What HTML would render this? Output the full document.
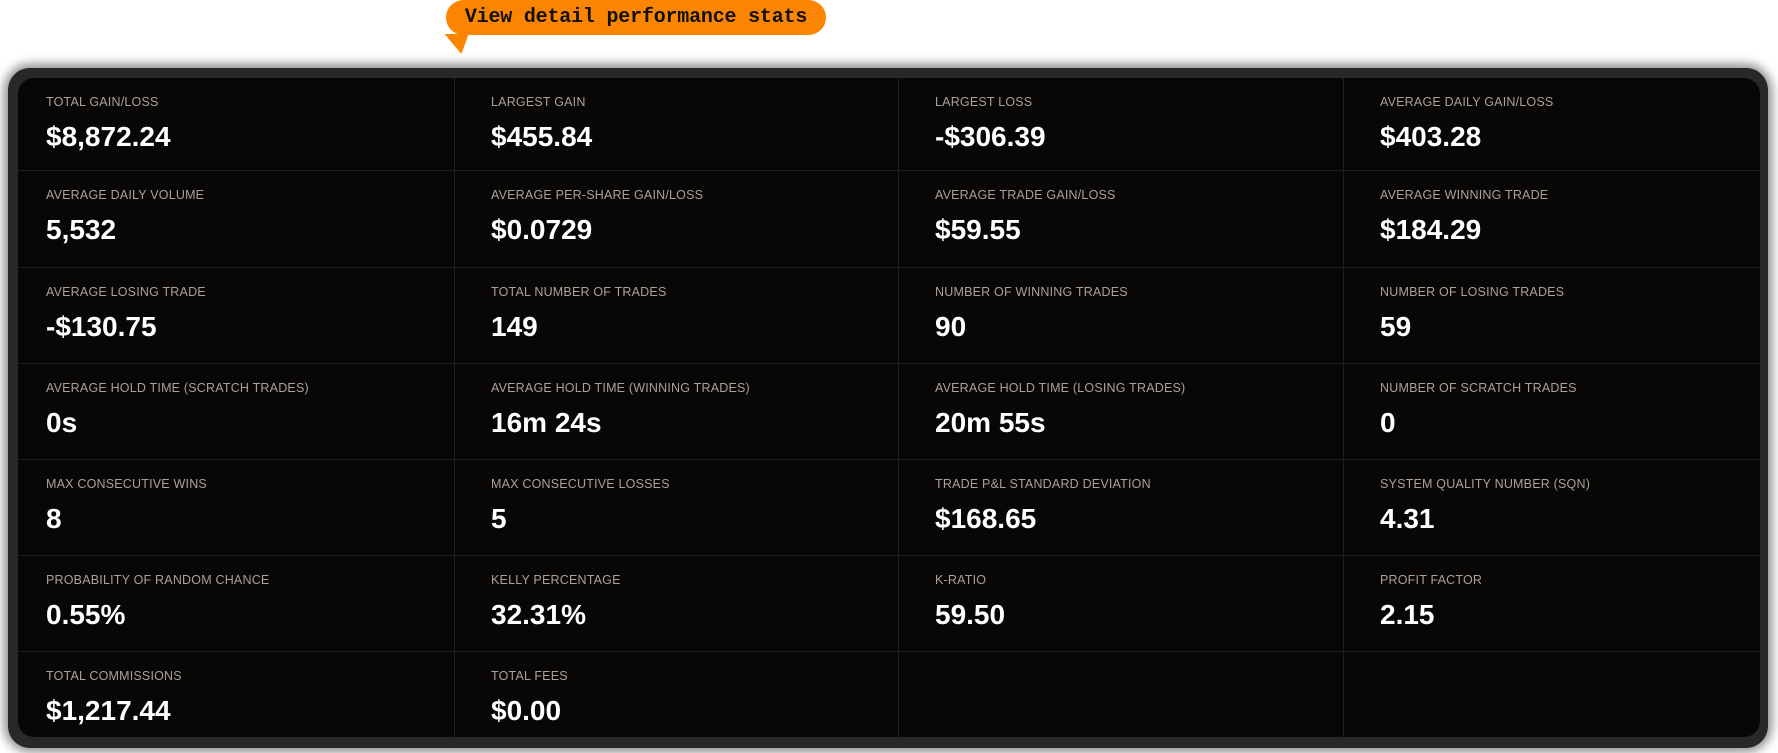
<!DOCTYPE html>
<html><head><meta charset="utf-8"><style>
html,body{margin:0;padding:0;background:#fff;width:1778px;height:753px;overflow:hidden;font-family:"Liberation Sans",sans-serif;}
.bubble{position:absolute;left:446px;top:0;width:380px;height:35px;background:#fb8500;border-radius:18px;font-family:"Liberation Mono",monospace;font-weight:bold;font-size:20px;color:#111;line-height:35px;text-align:center;letter-spacing:-0.2px;}
.tail{position:absolute;left:441px;top:34px;width:0;height:0;border-left:24px solid transparent;border-top:20px solid #fb8500;transform:skewX(-20deg);}
.card{position:absolute;left:8px;top:68px;width:1760px;height:680px;border-radius:22px;background:#2a2826;box-shadow:0 0 10px 4px rgba(0,0,0,.45);}
.panel{position:absolute;left:18px;top:78px;width:1742px;height:659px;border-radius:16px;background:#080706;overflow:hidden;display:grid;grid-template-columns:437px 444px 445px 416px;grid-template-rows:93px 97px 96px 96px 96px 96px 85px;}
.c{border-right:1px solid #221f1d;border-bottom:1px solid #221f1d;position:relative;}
.c:nth-child(4n){border-right:none}
.l{position:absolute;left:36px;top:17px;font-size:12.5px;color:#a8a19c;letter-spacing:.2px;}
.v{position:absolute;left:36px;top:43px;font-size:28px;line-height:32px;font-weight:bold;color:#fff;}
.c:nth-child(4n+1) .l,.c:nth-child(4n+1) .v{left:28px}
</style></head><body>
<div class="bubble">View detail performance stats</div>
<div class="tail"></div>
<div class="card"></div>
<div class="panel">
<div class="c"><div class="l">TOTAL GAIN/LOSS</div><div class="v">$8,872.24</div></div>
<div class="c"><div class="l">LARGEST GAIN</div><div class="v">$455.84</div></div>
<div class="c"><div class="l">LARGEST LOSS</div><div class="v">-$306.39</div></div>
<div class="c"><div class="l">AVERAGE DAILY GAIN/LOSS</div><div class="v">$403.28</div></div>
<div class="c"><div class="l">AVERAGE DAILY VOLUME</div><div class="v">5,532</div></div>
<div class="c"><div class="l">AVERAGE PER-SHARE GAIN/LOSS</div><div class="v">$0.0729</div></div>
<div class="c"><div class="l">AVERAGE TRADE GAIN/LOSS</div><div class="v">$59.55</div></div>
<div class="c"><div class="l">AVERAGE WINNING TRADE</div><div class="v">$184.29</div></div>
<div class="c"><div class="l">AVERAGE LOSING TRADE</div><div class="v">-$130.75</div></div>
<div class="c"><div class="l">TOTAL NUMBER OF TRADES</div><div class="v">149</div></div>
<div class="c"><div class="l">NUMBER OF WINNING TRADES</div><div class="v">90</div></div>
<div class="c"><div class="l">NUMBER OF LOSING TRADES</div><div class="v">59</div></div>
<div class="c"><div class="l">AVERAGE HOLD TIME (SCRATCH TRADES)</div><div class="v">0s</div></div>
<div class="c"><div class="l">AVERAGE HOLD TIME (WINNING TRADES)</div><div class="v">16m 24s</div></div>
<div class="c"><div class="l">AVERAGE HOLD TIME (LOSING TRADES)</div><div class="v">20m 55s</div></div>
<div class="c"><div class="l">NUMBER OF SCRATCH TRADES</div><div class="v">0</div></div>
<div class="c"><div class="l">MAX CONSECUTIVE WINS</div><div class="v">8</div></div>
<div class="c"><div class="l">MAX CONSECUTIVE LOSSES</div><div class="v">5</div></div>
<div class="c"><div class="l">TRADE P&amp;L STANDARD DEVIATION</div><div class="v">$168.65</div></div>
<div class="c"><div class="l">SYSTEM QUALITY NUMBER (SQN)</div><div class="v">4.31</div></div>
<div class="c"><div class="l">PROBABILITY OF RANDOM CHANCE</div><div class="v">0.55%</div></div>
<div class="c"><div class="l">KELLY PERCENTAGE</div><div class="v">32.31%</div></div>
<div class="c"><div class="l">K-RATIO</div><div class="v">59.50</div></div>
<div class="c"><div class="l">PROFIT FACTOR</div><div class="v">2.15</div></div>
<div class="c" style="border-bottom:none"><div class="l">TOTAL COMMISSIONS</div><div class="v">$1,217.44</div></div>
<div class="c" style="border-bottom:none"><div class="l">TOTAL FEES</div><div class="v">$0.00</div></div>
<div class="c" style="border-bottom:none"></div>
<div class="c" style="border-bottom:none"></div>
</div>
</body></html>
